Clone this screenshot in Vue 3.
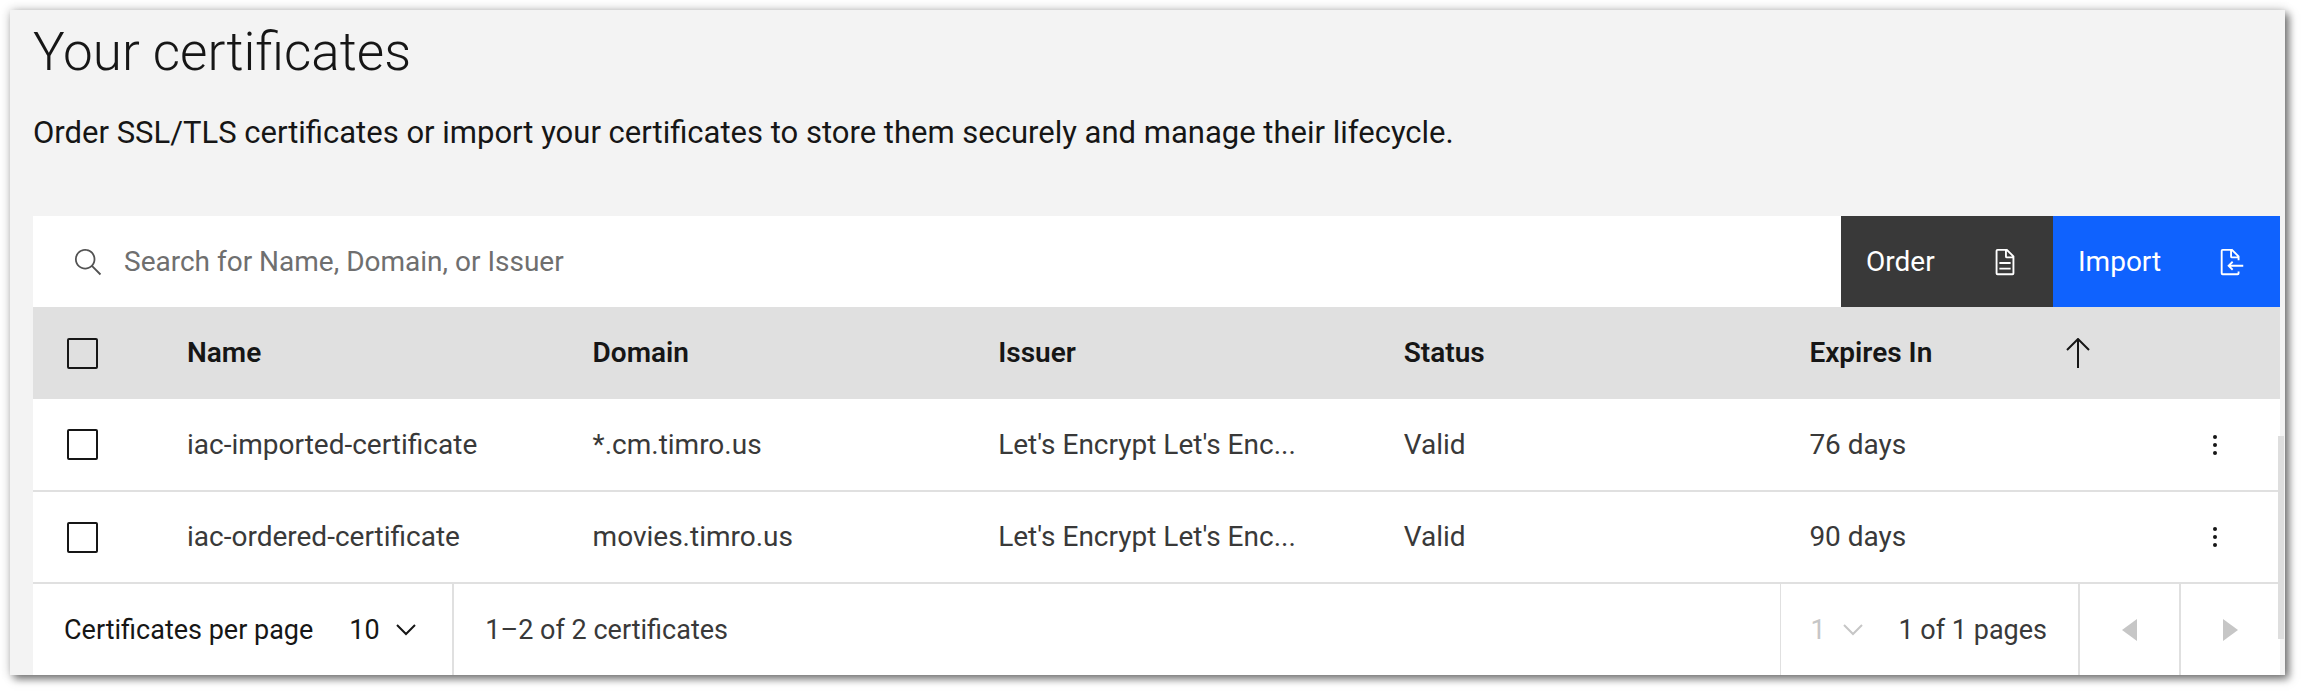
<script setup>
import { ref } from 'vue'

const query = ref('')
const perPage = ref('10')
const page = ref('1')
const selected = ref([])

const columns = ['Name', 'Domain', 'Issuer', 'Status']
const certificates = [
  { name: 'iac-imported-certificate', domain: '*.cm.timro.us', issuer: "Let's Encrypt Let's Enc...", status: 'Valid', expires: '76 days' },
  { name: 'iac-ordered-certificate', domain: 'movies.timro.us', issuer: "Let's Encrypt Let's Enc...", status: 'Valid', expires: '90 days' }
]

function toggleAll(event) {
  selected.value = event.target.checked ? certificates.map((c) => c.name) : []
}
</script>

<template>
  <main class="panel">
    <header class="intro">
      <h1>Your certificates</h1>
      <p>Order SSL/TLS certificates or import your certificates to store them securely and manage their lifecycle.</p>
    </header>

    <div class="body">
      <section class="certificates">
        <div class="toolbar">
          <label class="search">
            <svg class="icon" viewBox="0 0 16 16" aria-hidden="true">
              <path d="M15 14.3L10.7 10c1.9-2.3 1.6-5.8-.7-7.7S4.2.7 2.3 3 .7 8.8 3 10.7c2 1.7 5 1.7 7 0l4.3 4.3.7-.7zM2 6.5C2 4 4 2 6.5 2S11 4 11 6.500 9 11 6.500 11 2 9 2 6.500z" />
            </svg>
            <input v-model="query" type="text" placeholder="Search for Name, Domain, or Issuer" aria-label="Search certificates" />
          </label>
          <button type="button" class="action order">
            Order
            <svg class="icon" viewBox="0 0 32 32" aria-hidden="true">
              <path d="M25.700 9.300l-7-7A.9.900 0 0 0 18 2H8a2 2 0 0 0-2 2v24a2 2 0 0 0 2 2h16a2 2 0 0 0 2-2V10a.9.900 0 0 0-.3-.7zM18 4.400l5.600 5.600H18zM24 28H8V4h8v6a2 2 0 0 0 2 2h6z" />
              <path d="M10 22h12v2H10zM10 16h12v2H10z" />
            </svg>
          </button>
          <button type="button" class="action import">
            Import
            <svg class="icon" viewBox="0 0 32 32" aria-hidden="true">
              <path d="M28 19H14.830l2.580-2.590L16 15l-5 5 5 5 1.410-1.410L14.830 21H28v-2z" />
              <path d="M24 14v-4a1 1 0 0 0-.29-.71l-7-7A1 1 0 0 0 16 2H6a2 2 0 0 0-2 2v24a2 2 0 0 0 2 2h16a2 2 0 0 0 2-2v-2h-2v2H6V4h8v6a2 2 0 0 0 2 2h6v2zM16 10V4.410L21.590 10z" />
            </svg>
          </button>
        </div>

        <table>
          <thead>
            <tr>
              <th class="select-cell" scope="col">
                <input type="checkbox" aria-label="Select all certificates" :checked="selected.length === certificates.length" @change="toggleAll" />
              </th>
              <th v-for="column in columns" :key="column" scope="col">{{ column }}</th>
              <th scope="col" aria-sort="ascending">
                <button type="button" class="sort">
                  Expires In
                  <svg class="arrow" viewBox="0 0 24 30" aria-hidden="true">
                    <path d="M12 30V2M1 12L12 1l11 11" />
                  </svg>
                </button>
              </th>
              <th class="menu-cell" aria-label="Actions"></th>
            </tr>
          </thead>
          <tbody>
            <tr v-for="cert in certificates" :key="cert.name">
              <td class="select-cell">
                <input v-model="selected" type="checkbox" :value="cert.name" :aria-label="'Select ' + cert.name" />
              </td>
              <td>{{ cert.name }}</td>
              <td>{{ cert.domain }}</td>
              <td>{{ cert.issuer }}</td>
              <td>{{ cert.status }}</td>
              <td>{{ cert.expires }}</td>
              <td class="menu-cell">
                <button type="button" class="menu" :aria-label="'Actions for ' + cert.name">
                  <svg viewBox="0 0 4 20" aria-hidden="true">
                    <circle cx="2" cy="2" r="2" /><circle cx="2" cy="10" r="2" /><circle cx="2" cy="18" r="2" />
                  </svg>
                </button>
              </td>
            </tr>
          </tbody>
        </table>

        <footer class="pagination">
          <div class="size">
            <label for="per-page">Certificates per page</label>
            <span class="picker">
              <select id="per-page" v-model="perPage">
                <option>10</option>
                <option>20</option>
                <option>50</option>
              </select>
              <svg viewBox="0 0 20 12" aria-hidden="true"><path d="M1 1l9 9 9-9" /></svg>
            </span>
          </div>
          <span class="range">1–2 of 2 certificates</span>
          <div class="pages">
            <span class="picker">
              <select v-model="page" disabled aria-label="Page number">
                <option>1</option>
              </select>
              <svg viewBox="0 0 20 12" aria-hidden="true"><path d="M1 1l9 9 9-9" /></svg>
            </span>
            <span>1 of 1 pages</span>
          </div>
          <button type="button" class="step" disabled aria-label="Previous page">
            <svg viewBox="0 0 15 22" aria-hidden="true"><path d="M15 0v22L0 11z" /></svg>
          </button>
          <button type="button" class="step" disabled aria-label="Next page">
            <svg viewBox="0 0 15 22" aria-hidden="true"><path d="M0 0v22l15-11z" /></svg>
          </button>
        </footer>
      </section>
      <div class="scroll-thumb" aria-hidden="true"></div>
    </div>
  </main>
</template>

<style>
body {
  background: #fff;
}
</style>

<style scoped>
.panel,
.panel * {
  box-sizing: border-box;
}

.panel {
  margin: 10px 19px 19px 10px;
  padding: 10px 5px 0 23px;
  background: #f3f3f3;
  box-shadow: 4px 4px 8px rgba(0, 0, 0, 0.5), 0 0 10px rgba(0, 0, 0, 0.2);
  color: #161616;
  font-family: Roboto, "Liberation Sans", sans-serif;
  font-size: 28px;
  line-height: 32px;
}

button,
input,
select {
  margin: 0;
  padding: 0;
  border: 0;
  border-radius: 0;
  background: transparent;
  color: inherit;
  font: inherit;
}

svg {
  display: block;
  flex: none;
  fill: currentColor;
}

.intro {
  padding-bottom: 63px;
}

h1 {
  margin: 0 0 29px;
  font-size: 53px;
  font-weight: 300;
  line-height: 64px;
}

p {
  margin: 0;
  font-size: 31px;
  line-height: 40px;
}

.body {
  position: relative;
}

.certificates {
  background: #fff;
}

.toolbar {
  display: flex;
  height: 91px;
}

.search {
  display: flex;
  flex: 1;
  align-items: center;
  gap: 21px;
  padding-left: 40px;
  color: #525252;
}

.search input {
  flex: 1;
  height: 100%;
  color: #161616;
  outline: none;
}

.search input::placeholder {
  color: #6f6f6f;
  opacity: 1;
}

.icon {
  width: 30px;
  height: 30px;
}

.action {
  display: flex;
  align-items: center;
  justify-content: space-between;
  padding: 0 33px 0 25px;
  color: #fff;
}

.order {
  width: 212px;
  background: #393939;
}

.import {
  width: 227px;
  background: #0f62fe;
}

table {
  width: 100%;
  border-collapse: separate;
  border-spacing: 0;
  table-layout: fixed;
}

th,
td {
  height: 92px;
  padding: 0 0 0 30px;
  text-align: left;
  vertical-align: middle;
  white-space: nowrap;
}

th {
  background: #e0e0e0;
  font-weight: 600;
}

td {
  color: #393939;
}

tbody tr:first-child td {
  height: 91px;
}

tbody tr + tr td {
  border-top: 2px solid #e0e0e0;
}

.select-cell {
  width: 124px;
  padding-left: 34px;
}

.menu-cell {
  width: 95px;
  padding: 0;
}

input[type="checkbox"] {
  display: block;
  width: 31px;
  height: 31px;
  border: 2px solid #161616;
  border-radius: 2px;
  appearance: none;
}

input[type="checkbox"]:checked {
  background: #161616;
}

.sort {
  display: flex;
  align-items: center;
  justify-content: space-between;
  width: 100%;
  padding-right: 95px;
}

.arrow {
  width: 24px;
  height: 30px;
  fill: none;
  stroke: currentColor;
  stroke-width: 2;
}

.menu {
  display: flex;
  align-items: center;
  justify-content: center;
  width: 60px;
  height: 60px;
  color: #161616;
}

.menu svg {
  width: 4px;
  height: 20px;
}

.pagination {
  display: flex;
  align-items: stretch;
  height: 93px;
  border-top: 2px solid #e0e0e0;
  color: #393939;
  font-size: 27px;
}

.size,
.range,
.pages {
  display: flex;
  align-items: center;
}

.size {
  gap: 36px;
  padding: 0 36px 0 31px;
  border-right: 2px solid #e0e0e0;
  color: #161616;
}

.range {
  flex: 1;
  padding-left: 31px;
}

.picker {
  display: flex;
  align-items: center;
  gap: 16px;
}

.picker select {
  appearance: none;
  outline: none;
}

.picker select:disabled {
  opacity: 1;
}

.picker svg {
  width: 20px;
  height: 12px;
  fill: none;
  stroke: currentColor;
  stroke-width: 2;
}

.pages {
  gap: 36px;
  padding: 0 31px 0 30px;
  border-left: 1px solid #e0e0e0;
}

.pages .picker {
  color: #c6c6c6;
}

.step {
  display: flex;
  align-items: center;
  justify-content: center;
  width: 101px;
  border-left: 2px solid #e0e0e0;
  color: #c6c6c6;
}

.step svg {
  width: 15px;
  height: 22px;
}

.scroll-thumb {
  position: absolute;
  top: 48%;
  right: -4px;
  bottom: 36px;
  width: 6px;
  background: #dedede;
}
</style>
